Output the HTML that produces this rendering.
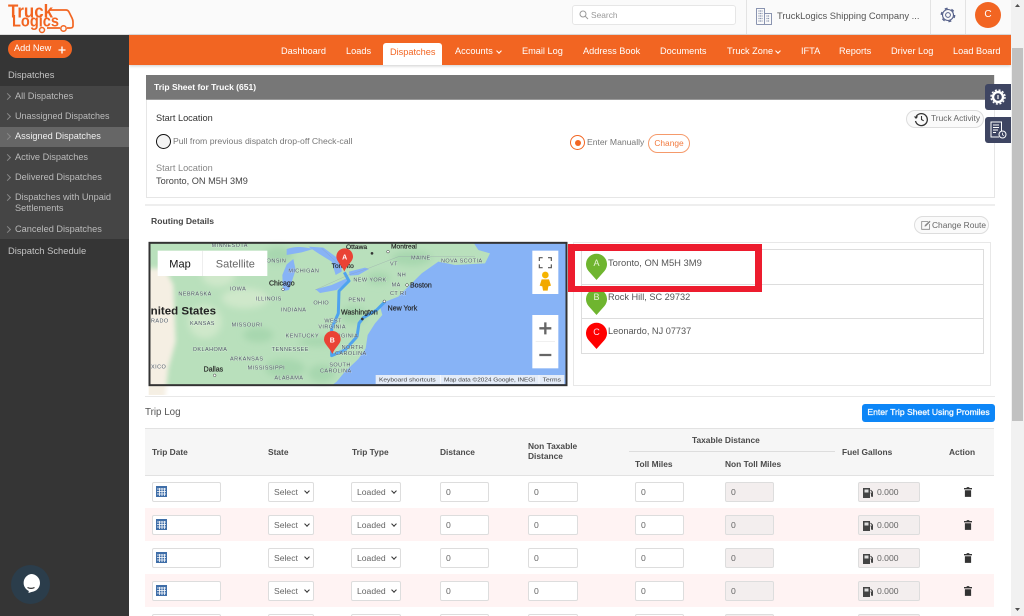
<!DOCTYPE html>
<html><head><meta charset="utf-8"><title>Trip Sheet</title>
<style>
html,body{margin:0;padding:0;width:1024px;height:616px;overflow:hidden;background:#fff;font-family:"Liberation Sans",sans-serif;font-size:9px;color:#444}
#w{position:absolute;left:0;top:0;width:1024px;height:616px;overflow:hidden;filter:blur(.35px)}
.a{position:absolute;white-space:nowrap}
.box{position:absolute;box-sizing:border-box}
.nav{position:absolute;top:46px;color:#fff;font-size:9.2px;line-height:11px;white-space:nowrap}
.side{position:absolute;left:15px;color:#bbb;font-size:9.2px;line-height:11px;white-space:nowrap}
.side:before{content:"";position:absolute;left:-10px;top:3px;width:4px;height:4px;border-top:1px solid #888;border-right:1px solid #888;transform:rotate(45deg)}
.th{position:absolute;color:#4a4a4a;font-weight:bold;font-size:8.4px;line-height:10px;white-space:nowrap}
.row{position:absolute;left:145px;width:849px;height:33px}
.pink{background:#fff3f3}
.in{position:absolute;top:7px;height:20px;box-sizing:border-box;background:#fff;border:1px solid #ddd;border-radius:2px;font-size:8.6px;line-height:18px;color:#666;padding-left:5px}
.g{background:#f3eeee}
.chev{position:absolute;top:6px;width:3px;height:3px;border-right:1.5px solid #333;border-bottom:1.5px solid #333;transform:rotate(45deg)}
svg{position:absolute;overflow:hidden}
</style></head><body><div id="w">

<!-- top bar -->
<div class="box" style="left:0;top:0;width:1011px;height:35px;background:#fafafa;border-bottom:1px solid #ddd"></div>
<svg style="left:0;top:0" width="80" height="35" viewBox="0 0 80 35">
<path d="M50 10H66Q68 10 69 12L72 18Q73 20 73 22V26Q73 28 70 28H67M60 28H47" fill="none" stroke="#f26522" stroke-width="1.700"/>
<circle cx="63.500" cy="28.500" r="2.700" fill="#fafafa" stroke="#f26522" stroke-width="1.500"/>
<circle cx="42" cy="30" r="2.500" fill="#fafafa" stroke="#f26522" stroke-width="1.500"/>
<text x="8" y="17.500" font-family="Liberation Sans" font-weight="bold" font-size="18" fill="#f26522" textLength="45" lengthAdjust="spacingAndGlyphs">Truck</text>
<text x="12" y="26.500" font-family="Liberation Sans" font-weight="bold" font-size="17" fill="#f26522" textLength="47" lengthAdjust="spacingAndGlyphs">Logics</text>
</svg>
<div class="box" style="left:572px;top:5px;width:164px;height:20px;background:#fff;border:1px solid #e6e6e6;border-radius:3px"></div>
<svg style="left:579px;top:10px" width="10" height="10" viewBox="0 0 10 10"><circle cx="4" cy="4" r="3" fill="none" stroke="#999"/><path d="M6.200 6.200L9 9" stroke="#999"/></svg>
<div class="a" style="left:591px;top:10px;color:#999;font-size:8.400px;line-height:11px">Search</div>
<div class="box" style="left:746px;top:0;width:1px;height:34px;background:#e3e3e3"></div>
<div class="box" style="left:930px;top:0;width:1px;height:34px;background:#e3e3e3"></div>
<div class="box" style="left:965px;top:0;width:1px;height:34px;background:#e3e3e3"></div>
<svg style="left:756px;top:8px" width="16" height="17" viewBox="0 0 16 17"><path d="M.5 16.500V.5H8.500V16.500M8.500 5.500H15.500V16.500H.5" fill="none" stroke="#8a94b0"/><path d="M2.500 3h4M2.500 5.500h4M2.500 8h4M2.500 10.500h4M2.500 13h4M10.500 8h3M10.500 10.500h3M10.500 13h3" stroke="#7f8aa8" stroke-width="1.200" stroke-dasharray="1 .6"/></svg>
<div class="a" style="left:777px;top:10px;color:#555;font-size:9.400px;line-height:12px">TruckLogics Shipping Company ...</div>
<svg style="left:940px;top:7px" width="16" height="16" viewBox="0 0 16 16"><circle cx="8" cy="8" r="2.400" fill="none" stroke="#56618a" stroke-width="1"/><circle cx="8" cy="8" r="5.500" fill="none" stroke="#56618a" stroke-width="1.100"/><circle cx="8" cy="8" r="6.700" fill="none" stroke="#56618a" stroke-width="1.300" stroke-dasharray="3 4"/></svg>
<div class="box" style="left:975px;top:2px;width:26px;height:26px;border-radius:50%;background:#f26522;color:#fff;text-align:center;line-height:26px;font-size:10px">C</div>

<!-- orange nav -->
<div class="box" style="left:129px;top:35px;width:882px;height:30px;background:#f26522;box-shadow:0 1px 3px rgba(0,0,0,.2)"></div>
<div class="box" style="left:383px;top:43px;width:59px;height:22px;background:#fff;border-radius:3px 3px 0 0"></div>
<div class="nav" style="left:281px">Dashboard</div>
<div class="nav" style="left:346px">Loads</div>
<div class="nav" style="left:390px;color:#f26522;top:47px">Dispatches</div>
<div class="nav" style="left:455px">Accounts</div><div class="chev" style="left:497px;top:49px;border-color:#fff"></div>
<div class="nav" style="left:522px">Email Log</div>
<div class="nav" style="left:583px">Address Book</div>
<div class="nav" style="left:660px">Documents</div>
<div class="nav" style="left:727px">Truck Zone</div><div class="chev" style="left:776px;top:49px;border-color:#fff"></div>
<div class="nav" style="left:801px">IFTA</div>
<div class="nav" style="left:839px">Reports</div>
<div class="nav" style="left:891px">Driver Log</div>
<div class="nav" style="left:953px">Load Board</div>

<!-- sidebar -->
<div class="box" style="left:0;top:35px;width:129px;height:581px;background:#353535"></div>
<div class="box" style="left:8px;top:40px;width:64px;height:18px;background:#f26522;border-radius:9px;color:#fff;font-size:9.200px;line-height:17px;padding-left:6px">Add New</div>
<svg style="left:57px;top:45px" width="10" height="10"><path d="M5 1.500v7M1.500 5h7" stroke="#fff" stroke-width="1.300"/></svg>
<div class="a" style="left:8px;top:69px;color:#c4c4c4;font-size:9.400px;line-height:11px">Dispatches</div>
<div class="box" style="left:0;top:86px;width:129px;height:153px;background:#454545"></div>
<div class="box" style="left:0;top:127px;width:129px;height:20px;background:#666"></div>
<div class="side" style="top:91px">All Dispatches</div>
<div class="side" style="top:111px;font-size:9px">Unassigned Dispatches</div>
<div class="side" style="top:131px;color:#f0f0f0">Assigned Dispatches</div>
<div class="side" style="top:152px">Active Dispatches</div>
<div class="side" style="top:172px">Delivered Dispatches</div>
<div class="side" style="top:192px">Dispatches with Unpaid<br>Settlements</div>
<div class="side" style="top:224px">Canceled Dispatches</div>
<div class="a" style="left:8px;top:245px;color:#c4c4c4;font-size:9.400px;line-height:11px">Dispatch Schedule</div>
<div class="box" style="left:11px;top:565px;width:39px;height:39px;border-radius:50%;background:#2b3d4b"></div>
<svg style="left:20px;top:572px" width="22" height="24" viewBox="0 0 22 24"><path d="M11 2a9 9 0 0 1 9 9c0 4.800-3.800 8.500-8.500 9l-3 1 .3-2A9 9 0 0 1 11 2z" fill="#fff"/><path d="M7.500 15.500q3.500 1.800 7 0" fill="none" stroke="#333" stroke-width="1.200"/></svg>

<!-- scrollbar -->
<div class="box" style="left:1011px;top:0;width:13px;height:616px;background:#f1f1f1"></div>
<div class="box" style="left:1012px;top:48px;width:11px;height:373px;background:#c1c1c1"></div>
<svg style="left:1011px;top:0" width="13" height="616"><path d="M4 7l2.500-3L9 7z" fill="#505050"/><path d="M4 608l2.500 3L9 608z" fill="#505050"/></svg>

<!-- card -->
<div class="box" style="left:146px;top:75px;width:849px;height:123px;background:#fff;border:1px solid #e6e6e6"></div>
<div class="box" style="left:146px;top:75px;width:848px;height:25px;background:#777;border-bottom:1px solid #999"></div>
<div class="a" style="left:154px;top:82px;color:#fff;font-weight:bold;font-size:8.500px;line-height:11px">Trip Sheet for Truck (651)</div>
<div class="a" style="left:156px;top:113px;color:#333;font-size:9.200px;line-height:11px">Start Location</div>
<div class="box" style="left:156px;top:134px;width:15px;height:15px;border-radius:50%;background:#f4f4f4;border:1.500px solid #111"></div>
<div class="a" style="left:173px;top:136px;color:#777;font-size:8.700px;line-height:11px">Pull from previous dispatch drop-off Check-call</div>
<div class="a" style="left:156px;top:163px;color:#888;font-size:9.200px;line-height:11px">Start Location</div>
<div class="a" style="left:156px;top:176px;color:#444;font-size:9.200px;line-height:11px">Toronto, ON M5H 3M9</div>
<div class="box" style="left:570px;top:135px;width:15px;height:15px;border-radius:50%;border:1.500px solid #f26522;background:#fff"></div>
<div class="box" style="left:574.500px;top:139.500px;width:6px;height:6px;border-radius:50%;background:#f26522"></div>
<div class="a" style="left:587px;top:137px;color:#777;font-size:8.600px;line-height:11px">Enter Manually</div>
<div class="box" style="left:648px;top:134px;width:42px;height:19px;border:1px solid #f59a6b;border-radius:10px;background:#fff;color:#f27a3e;font-size:8.400px;line-height:17px;text-align:center">Change</div>
<div class="box" style="left:906px;top:110px;width:78px;height:18px;border:1px solid #ddd;border-radius:9px;background:#fafafa"></div>
<svg style="left:913px;top:111px" width="16" height="16" viewBox="0 0 16 16"><path d="M3.200 5.500A6 6 0 1 1 2.500 10" fill="none" stroke="#333" stroke-width="1.300"/><path d="M.8 5.500h4.400L3 8z" fill="#333"/><path d="M8.500 5v3.500l2.200 1.300" fill="none" stroke="#333" stroke-width="1.100"/></svg>
<div class="a" style="left:931px;top:113px;color:#666;font-size:8.400px;line-height:11px">Truck Activity</div>

<!-- floating -->
<div class="box" style="left:985px;top:84px;width:26px;height:26px;background:#3e4562;border-radius:3px 0 0 3px"></div>
<svg style="left:990px;top:89px" width="16" height="16" viewBox="0 0 16 16"><circle cx="8" cy="8" r="5" fill="none" stroke="#fff" stroke-width="2.400"/><circle cx="8" cy="8" r="7" fill="none" stroke="#fff" stroke-width="1.400" stroke-dasharray="2 1.700"/><path d="M8 6v4" stroke="#fff" stroke-width="1.200"/></svg>
<div class="box" style="left:985px;top:117px;width:26px;height:26px;background:#3e4562;border-radius:3px 0 0 3px"></div>
<svg style="left:990px;top:121px" width="17" height="18" viewBox="0 0 17 18"><path d="M11.500 10V1H1v15h8" fill="none" stroke="#fff"/><path d="M3 4h6M3 6.500h6M3 9h5M3 11.500h3" stroke="#fff" stroke-width=".9"/><circle cx="12.500" cy="13.500" r="3.500" fill="none" stroke="#fff"/><path d="M12.500 11.800v2l1.300.8" fill="none" stroke="#fff" stroke-width=".8"/></svg>

<div class="box" style="left:145px;top:204px;width:850px;height:2px;background:#eee"></div>
<div class="a" style="left:151px;top:216px;color:#444;font-weight:bold;font-size:8.600px;line-height:11px">Routing Details</div>
<div class="box" style="left:914px;top:216px;width:75px;height:18px;border:1px solid #ddd;border-radius:9px;background:#fafafa"></div>
<svg style="left:921px;top:220px" width="10" height="10" viewBox="0 0 10 10"><path d="M7 1.500H.7v7.800h7.800V4" fill="none" stroke="#888" stroke-width=".8"/><path d="M3.500 6.500l.4-1.500L8.500.8l1 1L5 6.200z" fill="#888"/></svg>
<div class="a" style="left:932px;top:220px;color:#666;font-size:8.400px;line-height:11px">Change Route</div>

<!-- map -->
<svg style="left:145px;top:235px" width="430" height="160" viewBox="0 0 1290 480" font-family="Liberation Sans">
<defs><filter id="b"><feGaussianBlur stdDeviation="7"/></filter><filter id="c"><feGaussianBlur stdDeviation="10"/></filter></defs>
<rect x="12" y="22" width="1254" height="430" fill="#87b3f6"/>
<path d="M12 22H985L1000 45L1035 55L1020 85L930 90L880 80L830 115L795 150L760 185L722 200L705 215L712 240L690 265L668 300L662 340L640 372L600 410L575 440L560 452H12Z" fill="#b9e0bc"/>
<path d="M-20 100H60L85 150L92 320L70 400L60 490H-20Z" fill="#f5efe3" filter="url(#b)"/>
<g fill="#a7d7af" filter="url(#c)">
<ellipse cx="340" cy="300" rx="45" ry="22"/><ellipse cx="520" cy="320" rx="60" ry="14"/><ellipse cx="625" cy="240" rx="40" ry="26"/><ellipse cx="530" cy="415" rx="40" ry="26"/><ellipse cx="400" cy="60" rx="45" ry="24"/><ellipse cx="800" cy="70" rx="60" ry="22"/><ellipse cx="700" cy="130" rx="35" ry="18"/><ellipse cx="420" cy="400" rx="60" ry="28"/>
</g>
<g fill="#cfe8ca" filter="url(#c)"><ellipse cx="300" cy="190" rx="70" ry="30"/><ellipse cx="180" cy="260" rx="50" ry="50"/><ellipse cx="220" cy="120" rx="50" ry="35"/></g>
<g fill="#87b3f6">
<path d="M425 42C450 34 470 34 505 42L470 52L425 60Z"/>
<path d="M425 88L445 72L452 105L432 165L414 168L412 120Z"/>
<path d="M490 35L535 38L590 78L590 110L572 120L560 80L520 55Z"/>
<path d="M512 163L560 150L610 128L616 136L575 165L525 174Z"/>
<path d="M612 110L660 98L672 102L640 120L614 122Z"/>
</g>
<path d="M598 112L612 138L582 168L580 235L560 280L560 362L600 345L636 305L642 265L655 248L695 225L720 200" fill="none" stroke="#4fa3ee" stroke-width="9" stroke-linejoin="round"/>
<path d="M530 40L590 95M510 165L610 120L670 100L760 65H990" fill="none" stroke="#8f96a6" stroke-width="1.500" opacity=".5"/>
<g fill="#4a5560" font-size="16.500" letter-spacing="1.300" stroke="#fff" stroke-width="2" stroke-opacity=".45" paint-order="stroke">
<text x="200" y="36">MINNESOTA</text><text x="365" y="82">ONSIN</text><text x="430" y="112">MICHIGAN</text><text x="625" y="140">NEW YORK</text><text x="735" y="92">VT</text><text x="757" y="124">NH</text><text x="740" y="154">MA</text><text x="735" y="180">CT RI</text><text x="798" y="73">MAINE</text><text x="888" y="83">NOVA SCOTIA</text><text x="255" y="167">IOWA</text><text x="100" y="181">NEBRASKA</text><text x="332" y="197">ILLINOIS</text><text x="408" y="230">INDIANA</text><text x="505" y="209">OHIO</text><text x="610" y="200">PENN</text><text x="538" y="262">WEST</text><text x="520" y="280">VIRGINIA</text><text x="135" y="270">KANSAS</text><text x="260" y="275">MISSOURI</text><text x="422" y="307">KENTUCKY</text><text x="575" y="307">RGINIA</text><text x="380" y="348">TENNESSEE</text><text x="590" y="342">NORTH</text><text x="570" y="360">CAROLINA</text><text x="143" y="348">OKLAHOMA</text><text x="255" y="376">ARKANSAS</text><text x="308" y="403">MISSISSIPPI</text><text x="388" y="433">ALABAMA</text><text x="553" y="394">SOUTH</text><text x="525" y="413">CAROLINA</text><text x="18" y="263">RADO</text><text x="18" y="401">XICO</text>
</g>
<g fill="#222" stroke="#222" stroke-width=".5">
<text x="603" y="42" font-size="20">Ottawa</text><text x="738" y="40" font-size="20">Montreal</text><text x="560" y="99" font-size="20">Toronto</text><text x="372" y="152" font-size="21">Chicago</text><text x="795" y="157" font-size="21">Boston</text><text x="588" y="239" font-size="21">Washington</text><text x="728" y="226" font-size="21">New York</text><text x="176" y="409" font-size="21">Dallas</text>
<text x="-8" y="239" font-size="33" font-weight="bold" stroke="none" textLength="221" lengthAdjust="spacingAndGlyphs">United States</text>
</g>
<circle cx="681" cy="55" r="4" fill="#333"/><circle cx="729" cy="50" r="4" fill="#fff" stroke="#333" stroke-width="1.500"/><circle cx="414" cy="163" r="4" fill="#fff" stroke="#333" stroke-width="1.500"/><circle cx="786" cy="150" r="4" fill="#fff" stroke="#333" stroke-width="1.500"/><circle cx="718" cy="199" r="4" fill="#fff" stroke="#333" stroke-width="1.500"/><circle cx="652" cy="252" r="4" fill="#333"/><circle cx="209" cy="421" r="4" fill="#fff" stroke="#333" stroke-width="1.500"/>
<path d="M598 110C590 90 574 80 574 65A25 25 0 0 1 624 65C624 80 606 90 598 110Z" fill="#ea4335"/>
<text x="599" y="73" fill="#fff" font-size="21" font-weight="bold" text-anchor="middle">A</text>
<path d="M562 357C554 337 537 327 537 313A25 25 0 0 1 587 313C587 327 570 337 562 357Z" fill="#ea4335"/>
<text x="562" y="322" fill="#fff" font-size="21" font-weight="bold" text-anchor="middle">B</text>
<rect x="38" y="47" width="329" height="76" fill="#fff"/><path d="M173 47v76" stroke="#e6e6e6" stroke-width="2"/>
<text x="105" y="97" font-size="33" text-anchor="middle" fill="#111">Map</text>
<text x="271" y="97" font-size="33" text-anchor="middle" fill="#666">Satellite</text>
<rect x="1162" y="47" width="78" height="130" fill="#fff"/>
<path d="M1183 78V68H1193M1209 68H1219V78M1183 88V98H1193M1219 88V98H1209" fill="none" stroke="#555" stroke-width="3.500"/>
<circle cx="1201" cy="120" r="10" fill="#f5b400"/><path d="M1190 133H1212L1218 152L1210 154L1208 167H1194L1192 154L1184 152Z" fill="#f2a900"/>
<rect x="1162" y="240" width="78" height="160" fill="#fff"/>
<path d="M1201 262V298M1183 280H1219M1183 360H1219" stroke="#666" stroke-width="7"/><path d="M1172 320H1230" stroke="#e6e6e6" stroke-width="2"/>
<rect x="692" y="420" width="566" height="27" fill="#e4ecf8"/>
<g font-size="17" fill="#444"><text x="702" y="439" textLength="170" lengthAdjust="spacingAndGlyphs">Keyboard shortcuts</text><text x="897" y="439" textLength="273" lengthAdjust="spacingAndGlyphs">Map data ©2024 Google, INEGI</text><text x="1193" y="439" textLength="55" lengthAdjust="spacingAndGlyphs">Terms</text></g>
<path d="M886 420v27M1182 420v27" stroke="#fff" stroke-width="2"/>
<rect x="0" y="0" width="11" height="480" fill="#fff"/>
<rect x="13.500" y="23.500" width="1251" height="427" fill="none" stroke="#333" stroke-width="6"/>
</svg>

<!-- stops panel -->
<div class="box" style="left:573px;top:242px;width:418px;height:144px;border:1px solid #e8e8e8"></div>
<div class="box" style="left:581px;top:249px;width:403px;height:105px;border:1px solid #ddd"></div>
<div class="box" style="left:581px;top:284px;width:403px;height:1px;background:#ddd"></div>
<div class="box" style="left:581px;top:318px;width:403px;height:1px;background:#ddd"></div>
<svg style="left:586px;top:253px" width="22" height="100" viewBox="0 0 22 100" font-family="Liberation Sans" font-size="9" text-anchor="middle">
<path d="M10.500 27L2.500 18A10.500 10.500 0 1 1 18.500 18Z" fill="#6fb52f"/><text x="10.500" y="13" fill="#e8f5d8">A</text>
<path d="M10.500 62L2.500 53A10.500 10.500 0 1 1 18.500 53Z" fill="#6fb52f"/><text x="10.500" y="47" fill="#e8f5d8">B</text>
<path d="M10.500 96L2.500 87A10.500 10.500 0 1 1 18.500 87Z" fill="#f00"/><text x="10.500" y="82" fill="#fde">C</text>
</svg>
<div class="a" style="left:608px;top:257px;color:#555;font-size:9.400px;line-height:11px">Toronto, ON M5H 3M9</div>
<div class="a" style="left:608px;top:292px;color:#555;font-size:9.200px;line-height:11px">Rock Hill, SC 29732</div>
<div class="a" style="left:608px;top:326px;color:#555;font-size:9.200px;line-height:11px">Leonardo, NJ 07737</div>
<div class="box" style="left:568px;top:244px;width:194px;height:48px;border:solid #ed1c2e;border-width:7px 7px 6px 7px"></div>

<div class="box" style="left:145px;top:396px;width:850px;height:1px;background:#e8e8e8"></div>

<!-- trip log -->
<div class="a" style="left:145px;top:407px;color:#555;font-size:9.800px;line-height:12px">Trip Log</div>
<div class="box" style="left:862px;top:404px;width:133px;height:18px;background:#0d86f7;border-radius:3px;color:#fff;font-size:8.600px;line-height:17px;text-align:center;-webkit-text-stroke:.25px #fff">Enter Trip Sheet Using Promiles</div>
<div class="box" style="left:145px;top:428px;width:849px;height:48px;background:#f6f6f6;border-top:1px solid #e2e2e2;border-bottom:1px solid #e2e2e2"></div>
<div class="th" style="left:152px;top:447px">Trip Date</div>
<div class="th" style="left:268px;top:447px">State</div>
<div class="th" style="left:352px;top:447px">Trip Type</div>
<div class="th" style="left:440px;top:447px">Distance</div>
<div class="th" style="left:528px;top:441px">Non Taxable<br>Distance</div>
<div class="th" style="left:692px;top:435px">Taxable Distance</div>
<div class="box" style="left:629px;top:451px;width:206px;height:1px;background:#ddd"></div>
<div class="th" style="left:635px;top:459px">Toll Miles</div>
<div class="th" style="left:725px;top:459px">Non Toll Miles</div>
<div class="th" style="left:842px;top:447px">Fuel Gallons</div>
<div class="th" style="left:949px;top:447px">Action</div>

<div class="row" style="top:475px">
<div class="in" style="left:7px;width:69px"><svg style="left:3px;top:3px" width="11" height="11"><rect width="11" height="11" fill="#3f6ea8"/><path d="M1 3h9M1 5.500h9M1 8h9M3.500 2v8M6 2v8M8.500 2v8" stroke="#fff" stroke-width=".8"/></svg></div>
<div class="in" style="left:123px;width:46px">Select<i class="chev" style="left:36px"></i></div>
<div class="in" style="left:206px;width:50px">Loaded<i class="chev" style="left:40px"></i></div>
<div class="in" style="left:295px;width:49px">0</div><div class="in" style="left:383px;width:50px">0</div><div class="in" style="left:490px;width:49px">0</div>
<div class="in g" style="left:580px;width:49px">0</div>
<div class="in g" style="left:713px;width:62px;padding-left:18px">0.000<svg style="left:4px;top:4px" width="11" height="11" viewBox="0 0 11 11"><path d="M0 1h7v10H0z" fill="#444"/><path d="M1.500 2.500h4v3h-4z" fill="#ddd"/><path d="M7.500 3l2 2v4q0 1-1 0V6H7.500" fill="none" stroke="#444"/></svg></div>
<svg style="left:819px;top:12px" width="8" height="10" viewBox="0 0 9 11"><path d="M3 1V0h3v1h3v1.500H0V1zM1 3.500h7V11H1z" fill="#333"/></svg>
</div>

<div class="row pink" style="top:508px">
<div class="in" style="left:7px;width:69px"><svg style="left:3px;top:3px" width="11" height="11"><rect width="11" height="11" fill="#3f6ea8"/><path d="M1 3h9M1 5.500h9M1 8h9M3.500 2v8M6 2v8M8.500 2v8" stroke="#fff" stroke-width=".8"/></svg></div>
<div class="in" style="left:123px;width:46px">Select<i class="chev" style="left:36px"></i></div>
<div class="in" style="left:206px;width:50px">Loaded<i class="chev" style="left:40px"></i></div>
<div class="in" style="left:295px;width:49px">0</div><div class="in" style="left:383px;width:50px">0</div><div class="in" style="left:490px;width:49px">0</div>
<div class="in g" style="left:580px;width:49px">0</div>
<div class="in g" style="left:713px;width:62px;padding-left:18px">0.000<svg style="left:4px;top:4px" width="11" height="11" viewBox="0 0 11 11"><path d="M0 1h7v10H0z" fill="#444"/><path d="M1.500 2.500h4v3h-4z" fill="#ddd"/><path d="M7.500 3l2 2v4q0 1-1 0V6H7.500" fill="none" stroke="#444"/></svg></div>
<svg style="left:819px;top:12px" width="8" height="10" viewBox="0 0 9 11"><path d="M3 1V0h3v1h3v1.500H0V1zM1 3.500h7V11H1z" fill="#333"/></svg>
</div>

<div class="row" style="top:541px">
<div class="in" style="left:7px;width:69px"><svg style="left:3px;top:3px" width="11" height="11"><rect width="11" height="11" fill="#3f6ea8"/><path d="M1 3h9M1 5.500h9M1 8h9M3.500 2v8M6 2v8M8.500 2v8" stroke="#fff" stroke-width=".8"/></svg></div>
<div class="in" style="left:123px;width:46px">Select<i class="chev" style="left:36px"></i></div>
<div class="in" style="left:206px;width:50px">Loaded<i class="chev" style="left:40px"></i></div>
<div class="in" style="left:295px;width:49px">0</div><div class="in" style="left:383px;width:50px">0</div><div class="in" style="left:490px;width:49px">0</div>
<div class="in g" style="left:580px;width:49px">0</div>
<div class="in g" style="left:713px;width:62px;padding-left:18px">0.000<svg style="left:4px;top:4px" width="11" height="11" viewBox="0 0 11 11"><path d="M0 1h7v10H0z" fill="#444"/><path d="M1.500 2.500h4v3h-4z" fill="#ddd"/><path d="M7.500 3l2 2v4q0 1-1 0V6H7.500" fill="none" stroke="#444"/></svg></div>
<svg style="left:819px;top:12px" width="8" height="10" viewBox="0 0 9 11"><path d="M3 1V0h3v1h3v1.500H0V1zM1 3.500h7V11H1z" fill="#333"/></svg>
</div>

<div class="row pink" style="top:574px">
<div class="in" style="left:7px;width:69px"><svg style="left:3px;top:3px" width="11" height="11"><rect width="11" height="11" fill="#3f6ea8"/><path d="M1 3h9M1 5.500h9M1 8h9M3.500 2v8M6 2v8M8.500 2v8" stroke="#fff" stroke-width=".8"/></svg></div>
<div class="in" style="left:123px;width:46px">Select<i class="chev" style="left:36px"></i></div>
<div class="in" style="left:206px;width:50px">Loaded<i class="chev" style="left:40px"></i></div>
<div class="in" style="left:295px;width:49px">0</div><div class="in" style="left:383px;width:50px">0</div><div class="in" style="left:490px;width:49px">0</div>
<div class="in g" style="left:580px;width:49px">0</div>
<div class="in g" style="left:713px;width:62px;padding-left:18px">0.000<svg style="left:4px;top:4px" width="11" height="11" viewBox="0 0 11 11"><path d="M0 1h7v10H0z" fill="#444"/><path d="M1.500 2.500h4v3h-4z" fill="#ddd"/><path d="M7.500 3l2 2v4q0 1-1 0V6H7.500" fill="none" stroke="#444"/></svg></div>
<svg style="left:819px;top:12px" width="8" height="10" viewBox="0 0 9 11"><path d="M3 1V0h3v1h3v1.500H0V1zM1 3.500h7V11H1z" fill="#333"/></svg>
</div>

<div class="row" style="top:607px">
<div class="in" style="left:7px;width:69px"></div>
<div class="in" style="left:123px;width:46px"></div>
<div class="in" style="left:206px;width:50px"></div>
<div class="in" style="left:295px;width:49px"></div><div class="in" style="left:383px;width:50px"></div><div class="in" style="left:490px;width:49px"></div>
<div class="in g" style="left:580px;width:49px"></div>
<div class="in g" style="left:713px;width:62px"></div>
</div>
</div></body></html>
